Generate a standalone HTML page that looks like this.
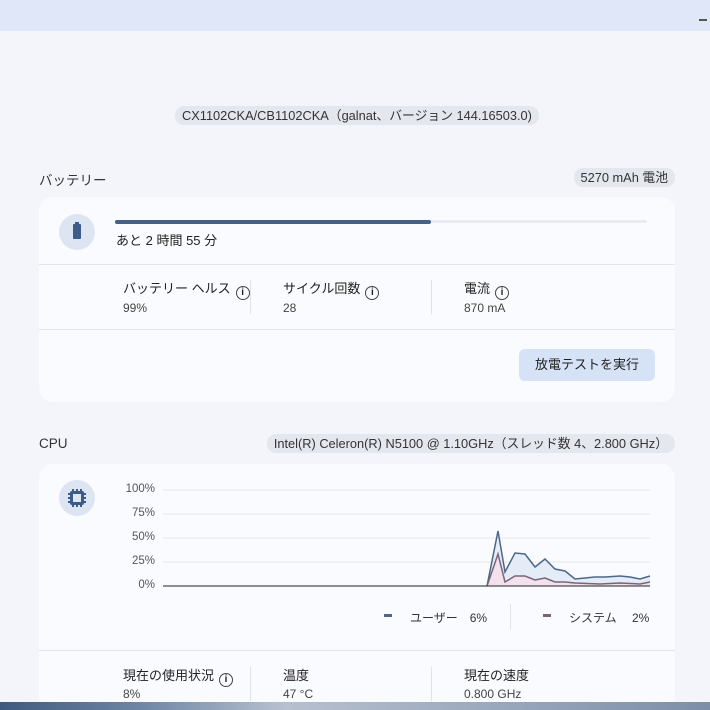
<!DOCTYPE html><html><head><meta charset="utf-8"><style>
*{box-sizing:border-box;margin:0;padding:0}
html,body{width:710px;height:710px;overflow:hidden}
body{background:#f3f5fb;font-family:"Liberation Sans","Noto Sans CJK JP",sans-serif;color:#1f1f1f;position:relative}
.top{position:absolute;left:0;top:0;width:710px;height:31px;background:#dfe7f8}
.min{position:absolute;right:3px;top:19px;width:8px;height:2px;background:#555}
.chip{position:absolute;background:#e4e7ee;border-radius:9px;font-size:12.8px;color:#333;height:19px;line-height:19px;padding:0 7px;white-space:nowrap}
.h{position:absolute;font-size:13.5px;color:#333}
.card{position:absolute;left:39px;width:636px;background:#fafbfe;border-radius:14px}
.ic{position:absolute;width:36px;height:36px;border-radius:50%;background:#dde5f3}
.sep{position:absolute;left:0;right:0;height:1px;background:#e3e5ea}
.l{position:absolute;font-size:13px;color:#222;white-space:nowrap}
.v{position:absolute;font-size:12px;color:#444;white-space:nowrap}
.vs{position:absolute;width:1px;background:#e0e2e7}
.i{display:inline-block;width:14px;height:14px;border:1.5px solid #444;border-radius:50%;font-size:10px;line-height:11px;text-align:center;font-weight:bold;vertical-align:-2px;margin-left:5px}
.ax{position:absolute;font-size:11.5px;color:#555;text-align:right;width:40px;left:115px}
</style></head><body>
<div class="top"></div><div class="min"></div>
<div class="chip" style="left:175px;top:106px">CX1102CKA/CB1102CKA（galnat、バージョン 144.16503.0)</div>
<div class="h" style="left:39px;top:169px">バッテリー</div>
<div class="chip" style="right:35px;top:168px;">5270 mAh 電池</div>
<div class="card" style="top:197px;height:205px">
 <div class="ic" style="left:20px;top:17px"><div style="position:absolute;left:14px;top:10px;width:8px;height:15px;background:#3c5a8a;border-radius:1px"></div><div style="position:absolute;left:16px;top:8px;width:4px;height:2px;background:#3c5a8a"></div></div>
 <div style="position:absolute;left:76px;top:23px;width:532px;height:3px;background:#e8ebf1;border-radius:2px"><div style="width:316px;height:4px;background:#466088;border-radius:2px"></div></div>
 <div class="l" style="left:77px;top:33px">あと 2 時間 55 分</div>
 <div class="sep" style="top:67px"></div>
 <div class="l" style="left:84px;top:81px">バッテリー ヘルス<span class="i">i</span></div>
 <div class="v" style="left:84px;top:104px">99%</div>
 <div class="vs" style="left:211px;top:83px;height:34px"></div>
 <div class="l" style="left:244px;top:81px">サイクル回数<span class="i">i</span></div>
 <div class="v" style="left:244px;top:104px">28</div>
 <div class="vs" style="left:392px;top:83px;height:34px"></div>
 <div class="l" style="left:425px;top:81px">電流<span class="i">i</span></div>
 <div class="v" style="left:425px;top:104px">870 mA</div>
 <div class="sep" style="top:132px"></div>
 <div style="position:absolute;left:480px;top:152px;width:136px;height:32px;background:#d6e3f7;border-radius:6px;font-size:13px;line-height:32px;text-align:center;color:#222">放電テストを実行</div>
</div>
<div class="h" style="left:39px;top:436px">CPU</div>
<div class="chip" style="right:35px;top:434px">Intel(R) Celeron(R) N5100 @ 1.10GHz（スレッド数 4、2.800 GHz）</div>
<div class="card" style="top:464px;height:246px">
 <div class="ic" style="left:20px;top:16px"><div style="position:absolute;left:11px;top:11px;width:14px;height:14px;border:3px solid #3c5a8a;border-radius:2px"></div><div style="position:absolute;left:9px;top:13px;width:18px;height:10px;border-left:2px dotted #3c5a8a;border-right:2px dotted #3c5a8a"></div><div style="position:absolute;left:13px;top:9px;width:10px;height:18px;border-top:2px dotted #3c5a8a;border-bottom:2px dotted #3c5a8a"></div></div>
</div>
<div class="ax" style="top:483px">100%</div>
<div class="ax" style="top:507px">75%</div>
<div class="ax" style="top:531px">50%</div>
<div class="ax" style="top:555px">25%</div>
<div class="ax" style="top:579px">0%</div>
<svg style="position:absolute;left:0;top:0" width="710" height="710">
<g stroke="#e5e7ec" stroke-width="1"><line x1="163" y1="490" x2="650" y2="490"/><line x1="163" y1="514" x2="650" y2="514"/><line x1="163" y1="538" x2="650" y2="538"/><line x1="163" y1="562" x2="650" y2="562"/></g>
<polygon fill="#e4ecf8" points="487,586 498,531 505,572 515,553 525,554 535,567 545,559 555,569 565,571 575,579 585,578 595,577 605,577 620,576 630,577 640,579 650,576 650,586"/>
<polygon fill="#f3e2ee" points="487,586 498,554 505,582 515,576 525,576 535,580 545,578 555,582 565,582 575,583 600,584 620,583 640,584 650,582 650,586"/>
<polyline fill="none" stroke="#4e6688" stroke-width="1.5" points="487,586 498,531 505,572 515,553 525,554 535,567 545,559 555,569 565,571 575,579 585,578 595,577 605,577 620,576 630,577 640,579 650,576"/>
<polyline fill="none" stroke="#7a6478" stroke-width="1.5" points="487,586 498,554 505,582 515,576 525,576 535,580 545,578 555,582 565,582 575,583 600,584 620,583 640,584 650,582"/>
<line x1="163" y1="586" x2="650" y2="586" stroke="#222" stroke-width="1"/>
</svg>
<div style="position:absolute;left:384px;top:614px;width:8px;height:3px;background:#4e6688"></div>
<div class="v" style="left:410px;top:609px;color:#333">ユーザー　6%</div>
<div class="vs" style="left:510px;top:604px;height:26px"></div>
<div style="position:absolute;left:543px;top:614px;width:8px;height:3px;background:#7a6478"></div>
<div class="v" style="left:569px;top:609px;color:#333">システム　 2%</div>
<div style="position:absolute;left:39px;top:650px;width:636px;height:1px;background:#e3e5ea"></div>
<div class="l" style="left:123px;top:665px">現在の使用状況<span class="i">i</span></div>
<div class="v" style="left:123px;top:687px">8%</div>
<div class="vs" style="left:250px;top:667px;height:34px"></div>
<div class="l" style="left:283px;top:665px">温度</div>
<div class="v" style="left:283px;top:687px">47 °C</div>
<div class="vs" style="left:431px;top:667px;height:34px"></div>
<div class="l" style="left:464px;top:665px">現在の速度</div>
<div class="v" style="left:464px;top:687px">0.800 GHz</div>
<div style="position:absolute;left:0;top:702px;width:710px;height:8px;background:linear-gradient(90deg,#3f5a7e,#6f86a6 20%,#b7c0cf 40%,#9aa8bd 70%,#7d8ea8)"></div>
</body></html>
